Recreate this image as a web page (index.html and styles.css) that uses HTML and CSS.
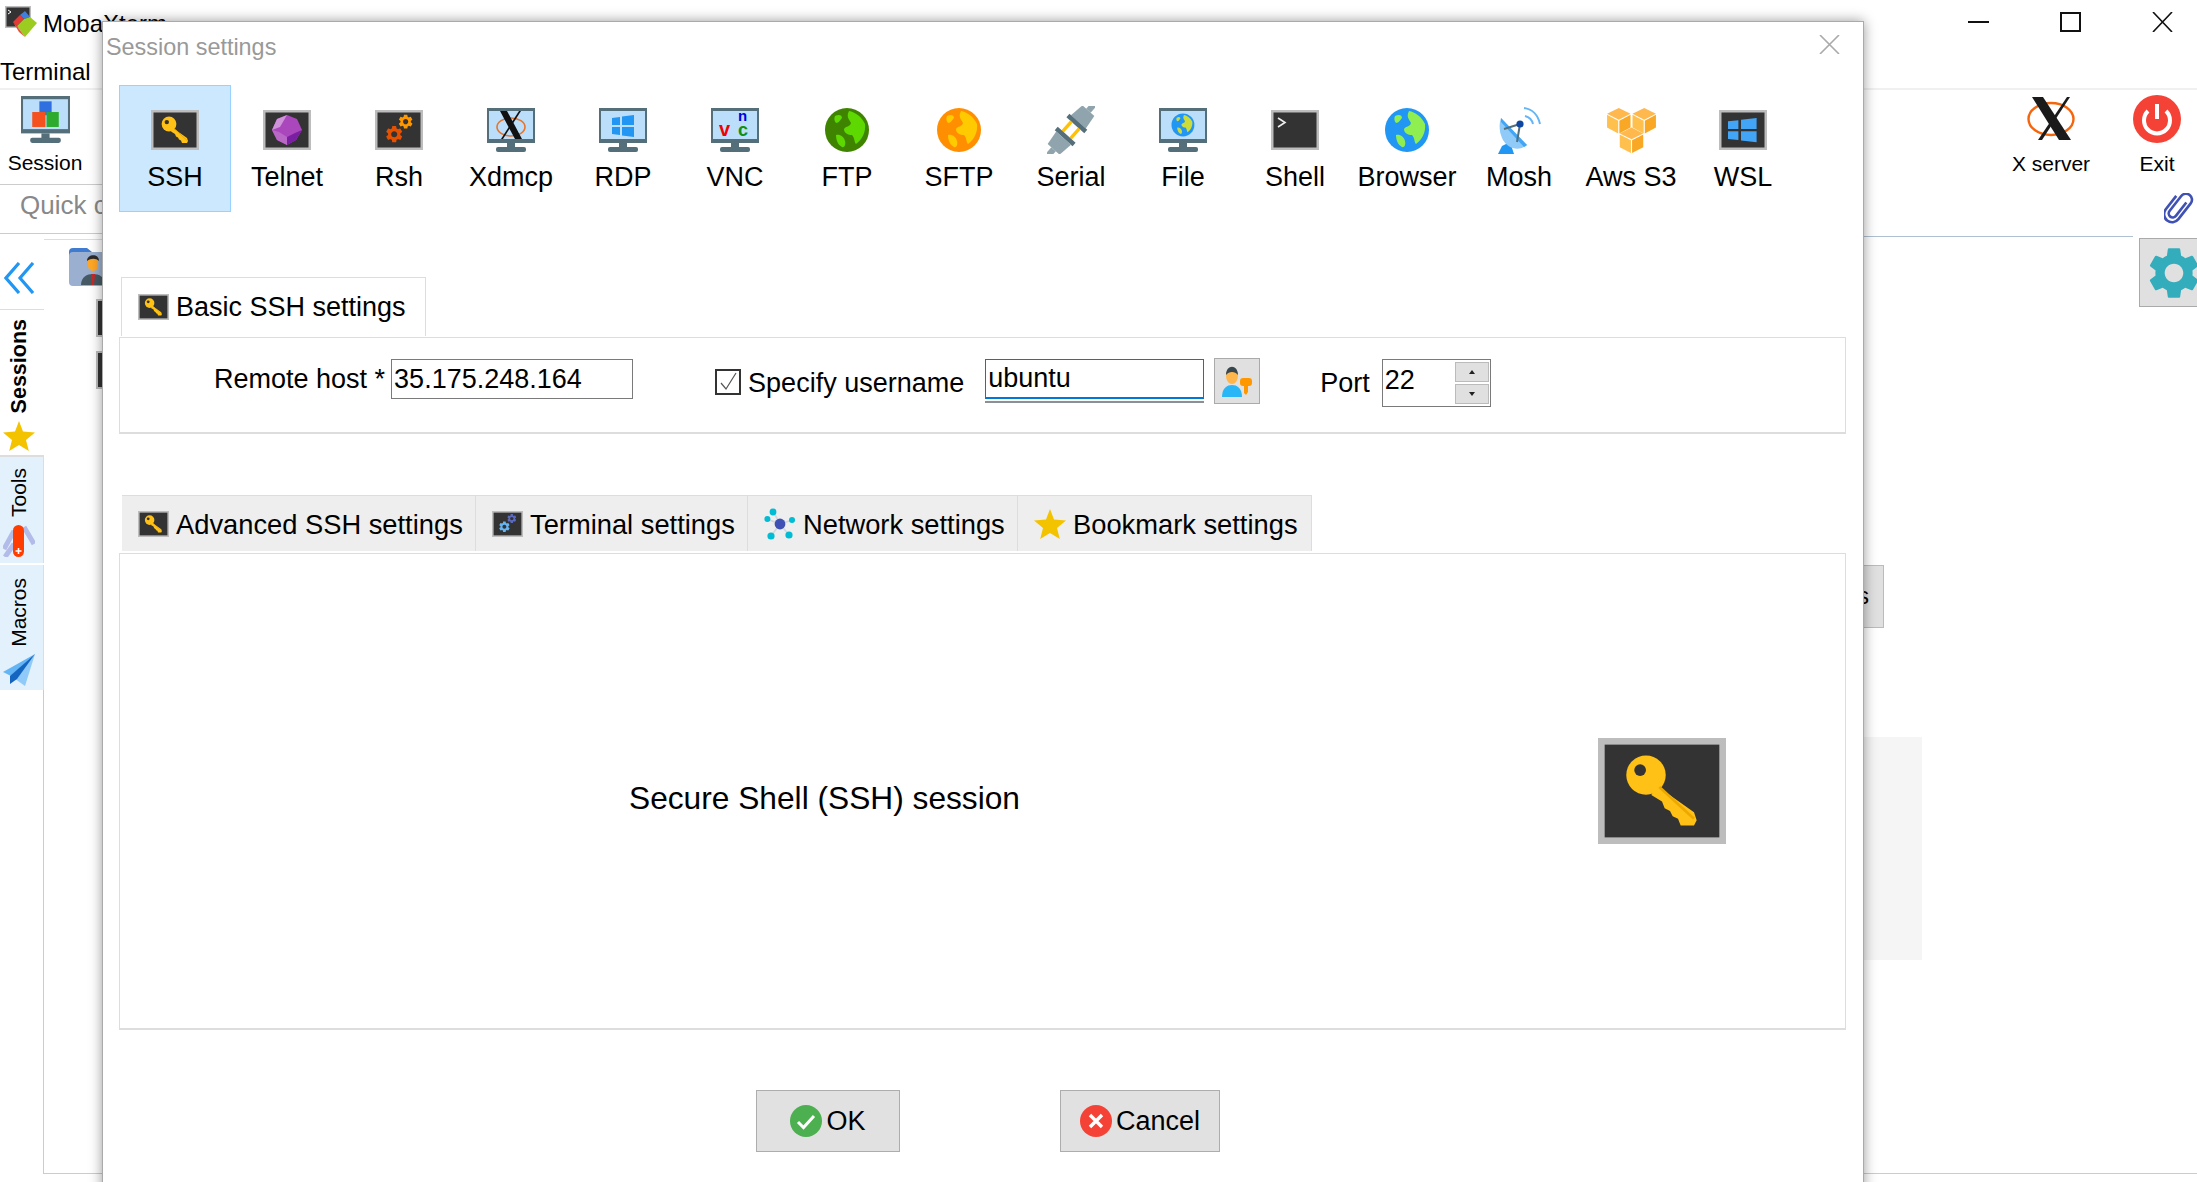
FILE: index.html
```html
<!DOCTYPE html>
<html lang="en">
<head>
    <meta charset="UTF-8">
    <meta name="viewport" content="width=device-width, initial-scale=1.0">
    <title>MobaXterm - Session settings</title>
    <link rel="stylesheet" href="styles.css">
</head>
<body>
    <!-- Shared icon parts -->
    <svg class="sprite" xmlns="http://www.w3.org/2000/svg">
        <defs>
            <g id="tile-bg"><rect width="48" height="40" fill="#bdbdbd"/><rect x="2.5" y="2.5" width="43" height="35" fill="#333"/></g>
            <g id="monitor-bg">
                <rect width="48" height="35" fill="#546e7a"/>
                <rect x="2" y="3" width="44" height="28" fill="var(--screen, #bbdefb)"/>
                <rect x="20" y="35" width="8" height="5" fill="#546e7a"/>
                <rect x="9" y="39" width="30" height="5" rx="2" fill="#546e7a"/>
            </g>
            <g id="windows-panes">
                <polygon points="0,3 8,2 8,10 0,10"/><polygon points="10,1.6 22,0 22,10 10,10"/>
                <polygon points="0,12 8,12 8,20 0,19"/><polygon points="10,12 22,12 22,22 10,20.4"/>
            </g>
            <g id="globe-art">
                <ellipse cx="22" cy="22" rx="22" ry="22" fill="var(--ocean)"/>
                <g fill="var(--land)">
                    <path d="M24 3C30 4 37 9 40 16C41 24 37 32 31 36C29 34 30 30 27 27C23 27 19 25 19 21C21 18 25 19 26 15C24 11 21 9 24 3Z"/>
                    <path d="M10 8C14 6 17 7 17 10C15 12 14 15 11 15C9 13 9 10 10 8Z"/>
                    <path d="M11 27C15 26 19 29 20 33C21 37 19 40 17 39C13 37 11 32 11 27Z"/>
                </g>
            </g>
            <path id="gear-path" d="M19.14 12.94c.04-.3.06-.61.06-.94 0-.32-.02-.64-.07-.94l2.03-1.58a.49.49 0 0 0 .12-.61l-1.92-3.32a.488.488 0 0 0-.59-.22l-2.39.96c-.5-.38-1.03-.7-1.62-.94l-.36-2.54a.484.484 0 0 0-.48-.41h-3.84c-.24 0-.43.17-.47.41l-.36 2.54c-.59.24-1.13.57-1.62.94l-2.39-.96c-.22-.08-.47 0-.59.22L2.74 8.87c-.12.21-.08.47.12.61l2.03 1.58c-.05.3-.09.63-.09.94s.02.64.07.94l-2.03 1.58a.49.49 0 0 0-.12.61l1.92 3.32c.12.22.37.29.59.22l2.39-.96c.5.38 1.03.7 1.62.94l.36 2.54c.05.24.24.41.48.41h3.84c.24 0 .44-.17.47-.41l.36-2.54c.59-.24 1.13-.56 1.62-.94l2.39.96c.22.08.47 0 .59-.22l1.92-3.32c.12-.22.07-.47-.12-.61l-2.01-1.58zM12 15.6c-1.98 0-3.6-1.62-3.6-3.6s1.62-3.6 3.6-3.6 3.6 1.62 3.6 3.6-1.62 3.6-3.6 3.6z"/>
            <g id="x-mark">
                <ellipse cx="24" cy="24" rx="22.5" ry="16" fill="none" stroke="#f4650c" stroke-width="2.4"/>
                <polygon points="5,2 16,2 44,45 32,45" fill="#1a1a1a"/>
                <polygon points="40,2 43,2 15,45 11,45" fill="#1a1a1a"/>
            </g>
            <g id="cube">
                <polygon points="12,0 24,6 12,12 0,6" fill="#ffb84d"/>
                <polygon points="0,7 11.4,13 11.4,26 0,20" fill="#ffc04d"/>
                <polygon points="24,7 12.6,13 12.6,26 24,20" fill="#f9a825"/>
            </g>
            <symbol id="i-key" viewBox="0 0 48 40" preserveAspectRatio="none">
                <use href="#tile-bg"/>
                <circle cx="18" cy="14" r="7.4" fill="#ffc116"/>
                <polygon points="22,18 36,28 37,31 36,33 31,33 30,30.5 28,29.5 27,27.5 25,26.5 24,24 20,21.5" fill="#ffc116"/>
                <line x1="23" y1="18.5" x2="36" y2="30.5" stroke="#eda900" stroke-width="1"/>
                <circle cx="15.8" cy="12.1" r="2.2" fill="#333"/>
            </symbol>
            <symbol id="i-gem" viewBox="0 0 48 40" preserveAspectRatio="none">
                <use href="#tile-bg"/>
                <polygon points="24,5 34,9 39,20 33,30 24,35 14,30 9,20 14,9" fill="#ab47bc"/>
                <polygon points="24,5 14,9 9,20 17,17" fill="#ce93d8"/>
                <polygon points="39,20 33,30 24,35 24,27 32,23" fill="#7b1fa2"/>
                <polygon points="9,20 14,30 24,35 24,27 16,22" fill="#ba68c8"/>
            </symbol>
            <symbol id="i-gears" viewBox="0 0 48 40" preserveAspectRatio="none">
                <use href="#tile-bg"/>
                <use href="#gear-path" transform="translate(9 14) scale(.85)" fill="#e65100"/>
                <use href="#gear-path" transform="translate(22 3) scale(.72)" fill="#ff9800"/>
            </symbol>
            <symbol id="i-gears-blue" viewBox="0 0 48 40" preserveAspectRatio="none">
                <use href="#tile-bg"/>
                <use href="#gear-path" transform="translate(9 14) scale(.85)" fill="#64b5f6"/>
                <use href="#gear-path" transform="translate(22 3) scale(.72)" fill="#5c6bc0"/>
            </symbol>
            <symbol id="i-shell" viewBox="0 0 48 40" preserveAspectRatio="none">
                <use href="#tile-bg"/>
                <polyline points="7,8 14,12.5 7,17" fill="none" stroke="#eee" stroke-width="1.6"/>
            </symbol>
            <symbol id="i-wsl" viewBox="0 0 48 40" preserveAspectRatio="none">
                <use href="#tile-bg"/>
                <use href="#windows-panes" transform="translate(9 8) scale(1.3 1.1)" fill="#42a5f5"/>
            </symbol>
            <symbol id="i-star" viewBox="0 0 32 30" preserveAspectRatio="none">
                <polygon points="16,0 20,10.5 32,11.5 23,19 25.8,30 16,24 6.2,30 9,19 0,11.5 12,10.5" fill="#f4c300"/>
            </symbol>
        </defs>
    </svg>

    <!-- Main window behind the dialog -->
    <div class="app">
        <header class="titlebar">
            <svg class="app-logo" viewBox="0 0 32 31">
                <rect width="26" height="22" fill="#bdbdbd"/><rect x="1.5" y="1.5" width="23" height="19" fill="#333"/>
                <polyline points="3,4 6,6 3,8" fill="none" stroke="#fff" stroke-width="1"/>
                <polygon points="8,16 15,9 19,13 12,20" fill="#e53935"/>
                <polygon points="15,9 20,5 25,11 19,13" fill="#3f7fe0"/>
                <polygon points="12,20 19,13 25,11 32,17 20,31" fill="#9ccc20"/>
                <polygon points="8,16 12,20 20,31 14,26" fill="#e5533d"/>
            </svg>
            <span class="app-title">MobaXterm</span>
            <div class="win-controls">
                <svg viewBox="0 0 21 20"><line x1="0" y1="10" x2="21" y2="10" stroke="#111" stroke-width="2"/></svg>
                <svg viewBox="0 0 21 20"><rect x="1" y="1" width="19" height="18" fill="none" stroke="#111" stroke-width="2"/></svg>
                <svg viewBox="0 0 21 20"><path d="M1 0L20 20M20 0L1 20" stroke="#111" stroke-width="1.6"/></svg>
            </div>
        </header>
        <nav class="menubar"><span>Terminal</span></nav>

        <div class="top">
            <div class="top-left">
                <div class="toolrow">
                    <div class="tool tool-session">
                        <svg class="tool-icon" width="49" height="47" viewBox="0 0 48 44" preserveAspectRatio="none">
                            <use href="#monitor-bg"/>
                            <rect x="18" y="5" width="12" height="13" fill="#2f6fe0"/>
                            <rect x="11" y="15" width="13" height="14" fill="#f4511e"/>
                            <rect x="25" y="15" width="12" height="14" fill="#2eab2e"/>
                        </svg>
                        <span>Session</span>
                    </div>
                </div>
                <div class="quick">Quick connect...</div>
            </div>
            <div class="top-right">
                <div class="toolrow-right">
                    <div class="tool tool-x">
                        <svg class="tool-icon" width="48" height="48" viewBox="0 0 48 48"><use href="#x-mark"/></svg>
                        <span>X server</span>
                    </div>
                    <div class="tool tool-exit">
                        <svg class="tool-icon" width="48" height="48" viewBox="0 0 48 48">
                            <circle cx="24" cy="24" r="24" fill="#f44336"/>
                            <path d="M15 16A13 13 0 1 0 33 16" fill="none" stroke="#fff" stroke-width="4"/>
                            <line x1="24" y1="9" x2="24" y2="24" stroke="#fff" stroke-width="4"/>
                        </svg>
                        <span>Exit</span>
                    </div>
                </div>
                <div class="clip-row">
                    <svg width="33" height="32" viewBox="0 0 33 32">
                        <g transform="rotate(38 16 16)">
                            <path d="M17 7V24a4 4 0 0 1-8 0V5a6 6 0 0 1 12 0V25a8 8 0 0 1-16 0V8" fill="none" stroke="#3f51b5" stroke-width="2.6"/>
                        </g>
                    </svg>
                </div>
                <div class="top-rule"></div>
            </div>
        </div>

        <div class="main">
            <aside class="sidebar">
                <div class="side-head">
                    <svg width="30" height="32" viewBox="0 0 30 32">
                        <path d="M15 1L2 16L15 31M29 1L16 16L29 31" fill="none" stroke="#2196f3" stroke-width="3.2"/>
                    </svg>
                </div>
                <div class="side-tab side-sessions">
                    <span class="side-label">Sessions</span>
                    <svg width="32" height="30"><use href="#i-star" width="32" height="30"/></svg>
                </div>
                <div class="side-tab side-tools">
                    <span class="side-label">Tools</span>
                    <svg width="32" height="32" viewBox="0 0 32 32">
                        <path d="M1 24L11 6M2 32L11 19M21 2L31 19" stroke="#b3bce8" stroke-width="5" fill="none"/>
                        <rect x="10" y="0" width="11" height="32" rx="5.5" fill="#ff3d00"/>
                        <path d="M15.5 23v6M12.5 26h6" stroke="#fff" stroke-width="1.6"/>
                    </svg>
                </div>
                <div class="side-tab side-macros">
                    <span class="side-label">Macros</span>
                    <svg width="32" height="32" viewBox="0 0 32 32">
                        <polygon points="32,0 0,18 8,22" fill="#64b5f6"/>
                        <polygon points="32,0 8,22 22,32" fill="#90caf9"/>
                        <polygon points="32,0 7,22 7,30 14,25" fill="#1565c0"/>
                    </svg>
                </div>
                <div class="side-rest"></div>
            </aside>

            <div class="content">
                <section class="workspace">
                    <div class="folder-bar">
                        <svg width="60" height="39" viewBox="0 0 60 39">
                            <path d="M0 5a4 4 0 0 1 4-4h14l5 4v6H0z" fill="#3f7ccf"/>
                            <rect y="5" width="60" height="34" rx="4" fill="#9bb0d0"/>
                            <path d="M12 38c0-8 6-11 12-11s12 3 12 11z" fill="#455a64"/>
                            <rect x="19" y="8" width="10" height="16" rx="5" fill="#ffa726"/>
                            <path d="M18 14c0-7 12-8 12 0-3-3-8-3-12 0z" fill="#2b2b2b"/>
                            <polygon points="22,27 26,27 25,38 23,38" fill="#c62828"/>
                        </svg>
                    </div>
                    <div class="mini-tile"></div>
                    <div class="mini-tile"></div>
                    <div class="stage-btn">Recover previous sessions</div>
                    <div class="stage-panel"></div>
                </section>
                <div class="gear-col">
                    <div class="gear-tile">
                        <svg width="62" height="62" viewBox="0 0 24 24"><use href="#gear-path" fill="#33adbb"/></svg>
                    </div>
                </div>
            </div>
        </div>
    </div>

    <!-- Session settings dialog -->
    <div class="dialog">
        <div class="dialog-head">
            <span class="dialog-title">Session settings</span>
            <svg class="dialog-close" width="21" height="19" viewBox="0 0 21 19"><path d="M1 0L20 19M20 0L1 19" stroke="#aaa" stroke-width="1.6"/></svg>
        </div>
        <div class="dialog-body">
            <div class="types">
                <div class="type active">
                    <div class="type-icon"><svg width="48" height="40"><use href="#i-key" width="48" height="40"/></svg></div>
                    <div class="type-label">SSH</div>
                </div>
                <div class="type">
                    <div class="type-icon"><svg width="48" height="40"><use href="#i-gem" width="48" height="40"/></svg></div>
                    <div class="type-label">Telnet</div>
                </div>
                <div class="type">
                    <div class="type-icon"><svg width="48" height="40"><use href="#i-gears" width="48" height="40"/></svg></div>
                    <div class="type-label">Rsh</div>
                </div>
                <div class="type">
                    <div class="type-icon">
                        <svg width="48" height="44" viewBox="0 0 48 44">
                            <use href="#monitor-bg"/>
                            <ellipse cx="24" cy="19" rx="14" ry="9" fill="none" stroke="#e8742a" stroke-width="1.6"/>
                            <polygon points="13,3 20,3 35,31 28,31" fill="#111"/>
                            <polygon points="32,3 34,3 16,31 14,31" fill="#111"/>
                        </svg>
                    </div>
                    <div class="type-label">Xdmcp</div>
                </div>
                <div class="type">
                    <div class="type-icon">
                        <svg width="48" height="44" viewBox="0 0 48 44">
                            <use href="#monitor-bg"/>
                            <use href="#windows-panes" transform="translate(13 7)" fill="#2196f3"/>
                        </svg>
                    </div>
                    <div class="type-label">RDP</div>
                </div>
                <div class="type">
                    <div class="type-icon">
                        <svg class="vnc" width="48" height="44" viewBox="0 0 48 44">
                            <use href="#monitor-bg"/>
                            <text class="vnc-v" x="8" y="28">v</text>
                            <text class="vnc-n" x="27" y="13">n</text>
                            <text class="vnc-c" x="27" y="28">c</text>
                        </svg>
                    </div>
                    <div class="type-label">VNC</div>
                </div>
                <div class="type">
                    <div class="type-icon"><svg class="globe-ftp" width="44" height="44" viewBox="0 0 44 44"><use href="#globe-art"/></svg></div>
                    <div class="type-label">FTP</div>
                </div>
                <div class="type">
                    <div class="type-icon"><svg class="globe-sftp" width="44" height="44" viewBox="0 0 44 44"><use href="#globe-art"/></svg></div>
                    <div class="type-label">SFTP</div>
                </div>
                <div class="type">
                    <div class="type-icon">
                        <svg width="48" height="48" viewBox="0 0 48 48">
                            <g transform="rotate(42 24 24)">
                                <rect x="21" y="-10" width="6" height="8" fill="#90a4ae"/>
                                <path d="M16 -2H32L34 13H14Z" fill="#90a4ae"/>
                                <rect x="12" y="13" width="24" height="4.5" fill="#546e7a"/>
                                <rect x="17" y="17.5" width="3.4" height="13" fill="#ffc107"/>
                                <rect x="27.6" y="17.5" width="3.4" height="13" fill="#ffc107"/>
                                <rect x="12" y="30.5" width="24" height="4.5" fill="#546e7a"/>
                                <path d="M14 35H34L32 50H16Z" fill="#90a4ae"/>
                                <rect x="21" y="50" width="6" height="8" fill="#90a4ae"/>
                            </g>
                        </svg>
                    </div>
                    <div class="type-label">Serial</div>
                </div>
                <div class="type">
                    <div class="type-icon">
                        <svg class="globe-file" width="48" height="44" viewBox="0 0 48 44">
                            <use href="#monitor-bg"/>
                            <use href="#globe-art" transform="translate(12.5 5.5) scale(.52)"/>
                        </svg>
                    </div>
                    <div class="type-label">File</div>
                </div>
                <div class="type">
                    <div class="type-icon"><svg width="48" height="40"><use href="#i-shell" width="48" height="40"/></svg></div>
                    <div class="type-label">Shell</div>
                </div>
                <div class="type">
                    <div class="type-icon"><svg class="globe-browser" width="44" height="44" viewBox="0 0 44 44"><use href="#globe-art"/></svg></div>
                    <div class="type-label">Browser</div>
                </div>
                <div class="type">
                    <div class="type-icon">
                        <svg width="46" height="48" viewBox="0 0 46 48">
                            <path d="M28 2C36 3 42 9 44 18M29 10C33 11 36 14 37 18" fill="none" stroke="#64b5f6" stroke-width="2"/>
                            <polygon points="6,40 14,36 18,48 2,48" fill="#2196f3"/>
                            <path d="M5 12L31 39C23 46 11 43 6 32C3 25 3 18 5 12Z" fill="#90caf9"/>
                            <path d="M5 12L31 39L28 41L5 16Z" fill="#42a5f5"/>
                            <path d="M8 23L24 18M24 18L21 36" stroke="#546e7a" stroke-width="2" fill="none"/>
                            <circle cx="24" cy="18" r="3.6" fill="#0d47a1"/>
                        </svg>
                    </div>
                    <div class="type-label">Mosh</div>
                </div>
                <div class="type">
                    <div class="type-icon">
                        <svg width="49" height="45" viewBox="0 0 50 46">
                            <use href="#cube"/>
                            <use href="#cube" x="26"/>
                            <use href="#cube" x="13" y="20"/>
                        </svg>
                    </div>
                    <div class="type-label">Aws S3</div>
                </div>
                <div class="type">
                    <div class="type-icon"><svg width="48" height="40"><use href="#i-wsl" width="48" height="40"/></svg></div>
                    <div class="type-label">WSL</div>
                </div>
            </div>

            <div class="tab-basic">
                <svg class="tab-icon"><use href="#i-key" width="31" height="26"/></svg>
                <span>Basic SSH settings</span>
            </div>
            <div class="basic-panel">
                <span class="field-label">Remote host *</span>
                <input class="field field-host" type="text" value="35.175.248.164">
                <span class="checkbox">
                    <svg width="22" height="22" viewBox="0 0 22 22"><polyline points="4,12 9,18 19,2" fill="none" stroke="#555" stroke-width="1.2"/></svg>
                </span>
                <span class="check-label">Specify username</span>
                <div class="user-wrap"><input class="field field-user" type="text" value="ubuntu"></div>
                <button class="user-btn">
                    <svg width="32" height="31" viewBox="0 0 32 31">
                        <path d="M1 31c0-9 5-12 10-12s10 3 10 12z" fill="#29b6f6"/>
                        <ellipse cx="11" cy="10" rx="6" ry="8" fill="#ffb74d"/>
                        <path d="M5 9c0-11 12-11 12 0-3-4-9-4-12 0z" fill="#37474f"/>
                        <rect x="19" y="12" width="12" height="8" rx="3" fill="#ff9800"/>
                        <polygon points="23,20 27,20 27,26 25,29 23,27" fill="#ff9800"/>
                    </svg>
                </button>
                <span class="port-label">Port</span>
                <div class="spin">
                    <input class="field field-port" type="text" value="22">
                    <div class="spin-btns">
                        <div class="spin-btn"><span class="arrow-up"></span></div>
                        <div class="spin-btn"><span class="arrow-down"></span></div>
                    </div>
                </div>
            </div>

            <div class="tabs">
                <div class="tab tab-adv">
                    <svg class="tab-icon"><use href="#i-key" width="31" height="26"/></svg>
                    <span>Advanced SSH settings</span>
                </div>
                <div class="tab tab-term">
                    <svg class="tab-icon"><use href="#i-gears-blue" width="31" height="26"/></svg>
                    <span>Terminal settings</span>
                </div>
                <div class="tab tab-net">
                    <svg width="32" height="32" viewBox="0 0 32 32">
                        <path d="M16 16L9 3M16 16L3 11M16 16L28 12M16 16L7 28M16 16L25 27" stroke="#cfd8dc" stroke-width="1.6"/>
                        <g fill="#00bcd4">
                            <circle cx="9" cy="4" r="3.4"/><circle cx="3.4" cy="11" r="3"/><circle cx="28" cy="12" r="3"/>
                            <circle cx="7" cy="28" r="3.6"/><circle cx="25" cy="27" r="3.6"/>
                        </g>
                        <circle cx="16" cy="16" r="5.4" fill="#3f51b5"/>
                    </svg>
                    <span>Network settings</span>
                </div>
                <div class="tab tab-book">
                    <svg width="32" height="30"><use href="#i-star" width="32" height="30"/></svg>
                    <span>Bookmark settings</span>
                </div>
            </div>
            <div class="info-panel">
                <span class="info-text">Secure Shell (SSH) session</span>
                <svg class="info-key" width="128" height="106"><use href="#i-key" width="128" height="106"/></svg>
            </div>

            <div class="actions">
                <button class="btn btn-ok">
                    <svg width="32" height="32" viewBox="0 0 32 32">
                        <circle cx="16" cy="16" r="16" fill="#4caf50"/>
                        <polyline points="8,17 13.5,22.5 24,11" fill="none" stroke="#fff" stroke-width="3"/>
                    </svg>
                    OK
                </button>
                <button class="btn btn-cancel">
                    <svg width="32" height="32" viewBox="0 0 32 32">
                        <circle cx="16" cy="16" r="16" fill="#f44336"/>
                        <path d="M10 10L22 22M22 10L10 22" stroke="#fff" stroke-width="3.4"/>
                    </svg>
                    Cancel
                </button>
            </div>
        </div>
    </div>
</body>
</html>
```

FILE: styles.css
```css
* {
    box-sizing: border-box;
}

body {
    position: relative;
    margin: 0;
    height: 1182px;
    overflow: hidden;
    background: white;
    font-family: "Liberation Sans", Arial, sans-serif;
    color: black;
}

.sprite {
    display: none;
}

/* Main window */
.titlebar {
    display: flex;
    align-items: flex-start;
    height: 40px;
    padding-left: 5px;
}

.app-logo {
    width: 32px;
    height: 31px;
    margin-top: 6px;
}

.app-title {
    margin: 8px 0 0 6px;
    font-size: 24px;
    line-height: 32px;
}

.win-controls {
    display: flex;
    gap: 71px;
    margin: 12px 24px 0 auto;
}

.win-controls svg {
    width: 21px;
    height: 20px;
}

.menubar {
    height: 50px;
    padding-top: 16px;
    border-bottom: 2px solid #f0f0f0;
    font-size: 24px;
    line-height: 32px;
}

.top {
    display: flex;
    height: 147px;
}

.top-left {
    width: 1000px;
}

.toolrow {
    height: 95px;
    border-bottom: 1px solid #ccc;
}

.tool {
    display: flex;
    flex-direction: column;
    align-items: center;
    font-size: 21px;
    line-height: 24px;
}

.tool-session {
    width: 90px;
    padding-top: 6px;
}

.tool-session .tool-icon {
    margin-bottom: 8px;
}

.quick {
    height: 49px;
    padding: 4px 0 0 20px;
    border-bottom: 1px solid #ccc;
    font-size: 26px;
    line-height: 32px;
    color: #888;
}

.top-right {
    display: flex;
    flex-direction: column;
    flex: 1;
    padding-left: 864px;
}

.toolrow-right {
    display: flex;
    gap: 31px;
    height: 103px;
    padding: 5px 0 0 142px;
}

.tool-x {
    width: 90px;
}

.tool-exit {
    width: 60px;
}

.tool-x .tool-icon,
.tool-exit .tool-icon {
    margin-bottom: 9px;
}

.clip-row {
    display: flex;
    justify-content: flex-end;
}

.top-rule {
    width: 269px;
    height: 1px;
    margin-top: auto;
    background: #b0c0d0;
}

.main {
    display: flex;
    height: 937px;
}

.sidebar {
    display: flex;
    flex-direction: column;
    width: 44px;
    flex-shrink: 0;
}

.side-head {
    height: 73px;
    padding: 25px 0 0 4px;
    border-bottom: 1px solid #ddd;
}

.side-tab {
    display: flex;
    flex-direction: column;
    align-items: center;
    padding-right: 6px;
}

.side-label {
    writing-mode: vertical-rl;
    transform: rotate(180deg);
    font-size: 21px;
    line-height: 24px;
}

.side-sessions {
    height: 147px;
    gap: 8px;
    padding-top: 9px;
    border-bottom: 2px solid #ddd;
}

.side-sessions .side-label {
    font-weight: bold;
    font-size: 21.5px;
}

.side-tools {
    height: 106px;
    gap: 8px;
    padding-top: 11px;
    background: #e3f1fc;
    border-right: 1px solid #ddd;
}

.side-macros {
    height: 125px;
    gap: 7px;
    margin-top: 2px;
    padding-top: 13px;
    background: #e3f1fc;
    border-right: 1px solid #ddd;
}

.side-rest {
    flex: 1;
    border-right: 1px solid #ccc;
}

.content {
    display: flex;
    flex: 1;
    border-bottom: 1px solid #ccc;
}

.workspace {
    flex: 1;
    padding-top: 2px;
}

.folder-bar {
    width: 200px;
    height: 60px;
    padding: 7px 0 0 25px;
    border-top: 1px solid #ddd;
}

.mini-tile {
    width: 48px;
    height: 38px;
    margin: 0 0 14px 52px;
    background: #333;
    border: 2px solid #bdbdbd;
}

.stage-btn {
    width: 500px;
    height: 63px;
    margin: 176px 0 0 1340px;
    padding-right: 14px;
    background: #e0e0e0;
    border: 1px solid #bbb;
    font-size: 23px;
    line-height: 61px;
    text-align: right;
    white-space: nowrap;
}

.stage-panel {
    width: 538px;
    height: 223px;
    margin: 109px 0 0 1340px;
    background: #f5f5f5;
}

.gear-col {
    width: 58px;
    flex-shrink: 0;
}

.gear-tile {
    display: flex;
    align-items: center;
    width: 70px;
    height: 69px;
    padding-left: 3px;
    margin-top: 1px;
    background: #e0e0e0;
    border: 1px solid #aaa;
}

/* Session settings dialog */
.dialog {
    position: absolute;
    left: 102px;
    top: 21px;
    width: 1762px;
    height: 1200px;
    background: white;
    border: 1px solid #aaa;
    box-shadow: 0 0 12px rgba(0,0,0,0.4);
}

.dialog-head {
    display: flex;
    justify-content: space-between;
    height: 63px;
    padding-left: 3px;
}

.dialog-title {
    margin-top: 11px;
    font-size: 23.4px;
    line-height: 28px;
    color: #999;
}

.dialog-close {
    margin: 13px 23px 0 0;
}

.dialog-body {
    padding: 0 17px 0 16px;
}

.types {
    display: flex;
}

.type {
    width: 112px;
    height: 127px;
    padding: 20px 1px 0 1px;
    border: 1px solid transparent;
    text-align: center;
    flex-shrink: 0;
}

.type.active {
    background: #cce8ff;
    border-color: #99d1ff;
}

.type-icon {
    display: flex;
    align-items: center;
    justify-content: center;
    height: 48px;
}

.type-label {
    margin-top: 7px;
    font-size: 27px;
    line-height: 32px;
    white-space: nowrap;
}

.vnc text {
    font-family: "Liberation Sans", Arial, sans-serif;
    font-weight: bold;
}

.vnc-v {
    font-size: 20px;
    fill: #f00000;
}

.vnc-n {
    font-size: 15px;
    fill: #0000e0;
}

.vnc-c {
    font-size: 18px;
    fill: #109010;
}

.globe-ftp {
    --ocean: #3f8400;
    --land: #5dd800;
}

.globe-sftp {
    --ocean: #ff8f00;
    --land: #ffca00;
}

.globe-file {
    --ocean: #2196f3;
    --land: #cddc39;
}

.globe-browser {
    --ocean: #2196f3;
    --land: #8fef50;
}

.tab-icon {
    width: 31px;
    height: 26px;
    flex-shrink: 0;
}

.tab-basic {
    display: flex;
    align-items: center;
    gap: 7px;
    width: 305px;
    height: 59px;
    margin: 65px 0 1px 2px;
    padding-left: 16px;
    border: 1px solid #ddd;
    border-bottom: none;
    font-size: 27px;
}

.basic-panel {
    display: flex;
    align-items: flex-start;
    height: 97px;
    padding: 21px 0 0 94px;
    border: 1px solid #ddd;
    border-bottom-width: 2px;
    font-size: 27px;
}

.field {
    display: block;
    height: 40px;
    padding: 0 2px;
    border: 1px solid #7a7a7a;
    border-radius: 0;
    outline: none;
    font-family: inherit;
    font-size: 27px;
    color: black;
}

.field-label {
    line-height: 40px;
}

.field-host {
    width: 242px;
    margin-left: 6px;
}

.checkbox {
    display: flex;
    align-items: center;
    justify-content: center;
    width: 26px;
    height: 26px;
    margin: 10px 0 0 82px;
    border: 2px solid #333;
}

.check-label {
    margin-left: 7px;
    line-height: 32px;
    margin-top: 8px;
}

.user-wrap {
    margin-left: 21px;
    padding-bottom: 2px;
    border-bottom: 2px solid #8a8f98;
}

.field-user {
    width: 219px;
    border-color: #0078d7;
    border-bottom-width: 2px;
}

.user-btn {
    display: flex;
    align-items: center;
    justify-content: center;
    width: 46px;
    height: 46px;
    margin: -1px 0 0 10px;
    padding: 0;
    background: #e0e0e0;
    border: 1px solid #aaa;
}

.port-label {
    margin: 8px 0 0 60px;
    line-height: 32px;
}

.spin {
    display: flex;
    width: 109px;
    height: 48px;
    margin-left: 12px;
    border: 1px solid #7a7a7a;
}

.field-port {
    width: 72px;
    height: 40px;
    border: none;
}

.spin-btns {
    display: flex;
    flex-direction: column;
    gap: 2px;
    padding-top: 2px;
}

.spin-btn {
    display: flex;
    align-items: center;
    justify-content: center;
    width: 34px;
    height: 20px;
    background: #e0e0e0;
    border: 1px solid #bbb;
}

.arrow-up {
    border-left: 3px solid transparent;
    border-right: 3px solid transparent;
    border-bottom: 4px solid #222;
}

.arrow-down {
    border-left: 3px solid transparent;
    border-right: 3px solid transparent;
    border-top: 4px solid #222;
}

.tabs {
    display: flex;
    margin: 61px 0 2px 3px;
    font-size: 27.3px;
}

.tab {
    display: flex;
    align-items: center;
    gap: 7px;
    height: 56px;
    padding-left: 16px;
    background: #eee;
    border-top: 1px solid #ddd;
    border-right: 1px solid #ddd;
    white-space: nowrap;
}

.tab span {
    margin-top: 2px;
}

.tab-adv {
    width: 354px;
}

.tab-term {
    width: 272px;
}

.tab-net {
    width: 270px;
}

.tab-book {
    width: 294px;
}

.info-panel {
    display: flex;
    align-items: center;
    height: 477px;
    padding: 0 119px 0 509px;
    border: 1px solid #ddd;
    border-bottom-width: 2px;
}

.info-text {
    margin-top: 14px;
    font-size: 31.7px;
}

.info-key {
    margin-left: auto;
}

.actions {
    display: flex;
    gap: 161px;
    margin-top: 60px;
    padding-left: 637px;
}

.btn {
    display: flex;
    align-items: center;
    justify-content: center;
    gap: 4px;
    height: 62px;
    padding: 0;
    background: #e1e1e1;
    border: 1px solid #adadad;
    font-family: inherit;
    font-size: 27px;
    color: black;
}

.btn-ok {
    width: 144px;
}

.btn-cancel {
    width: 160px;
    margin-left: -1px;
}
```
